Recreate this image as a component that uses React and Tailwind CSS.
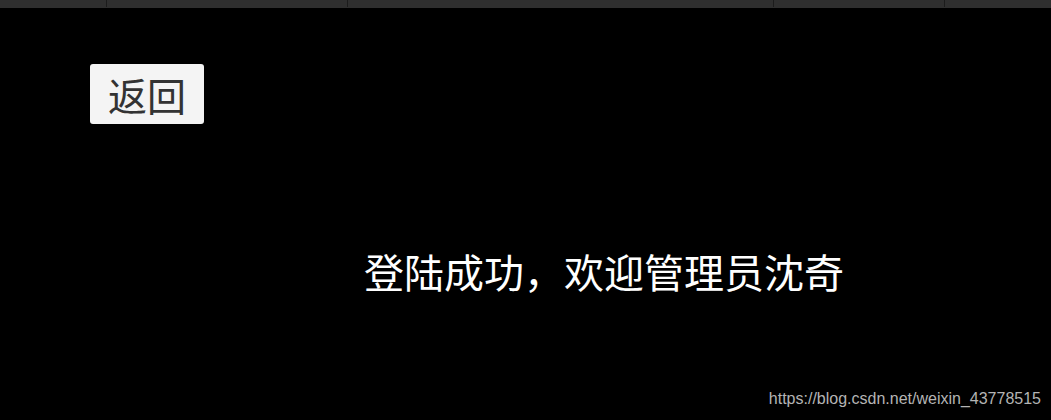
export default function App() {
  return (
    <div className="w-[1051px] h-[420px] bg-black flex flex-col overflow-hidden">
      <div className="h-[8px] bg-[#2f2f2f] flex items-start shrink-0">
        <div className="w-[107px] h-[7px] border-r border-[#1c1c1c]" />
        <div className="w-[241px] h-[7px] border-r border-[#1c1c1c]" />
        <div className="w-[426px] h-[7px] border-r border-[#1c1c1c]" />
        <div className="w-[171px] h-[7px] border-r border-[#1c1c1c]" />
      </div>
      <div className="pl-[90px] pt-[56px]">
        <button className="w-[114px] h-[60px] bg-[#f4f4f4] rounded-[3px] flex items-center justify-center text-[#333333] text-[39px] leading-none font-['Noto_Sans_CJK_SC',sans-serif]">
          返回
        </button>
      </div>
      <div className="pl-[364px] pt-[121px]">
        <p className="text-white text-[40px] leading-[52px] font-['Noto_Sans_CJK_SC',sans-serif] whitespace-nowrap">
          登陆成功，欢迎管理员沈奇
        </p>
      </div>
      <div className="flex justify-end pr-[10px] pt-[94px]">
        <span className="text-[#b4b4b4] text-[16px] leading-none font-['Liberation_Sans',Arial,sans-serif]">
          https://blog.csdn.net/weixin_43778515
        </span>
      </div>
    </div>
  );
}
